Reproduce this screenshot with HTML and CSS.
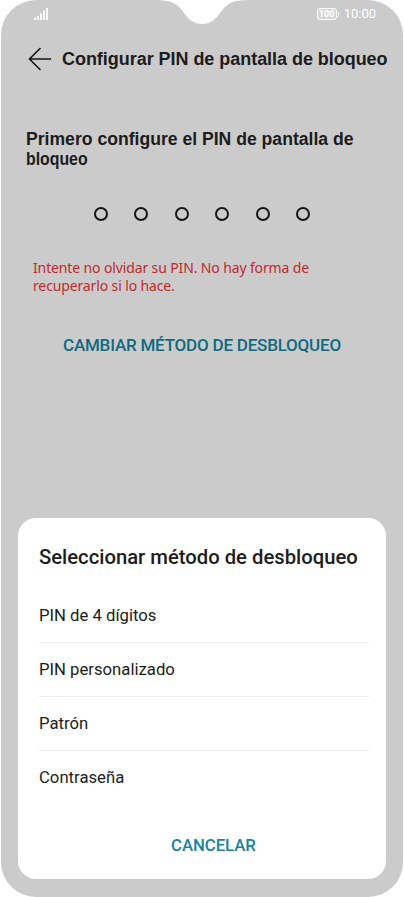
FILE: index.html
```html
<!DOCTYPE html>
<html lang="es">
	<head>
		<meta charset="utf-8" />
		<title>Configurar PIN</title>
		<link rel="stylesheet" href="styles.css">
	</head>
	<body>
		<div class="phone">
			<svg class="notch" width="92" height="25" viewBox="0 0 92 25">
				<path d="M0 0C15 0 21 3 28 13C33 20 38 24 46 24C54 24 59 20 64 13C71 3 77 0 92 0Z" fill="#fff"/>
			</svg>
			<div class="status">
				<svg class="signal" width="14" height="13" viewBox="0 0 14 13">
					<path d="M1 13v-2.500M4 13V9M7 13V6.500M10 13V3.500M13 13V1" stroke="#fff" stroke-width="1.700"/>
				</svg>
				<div class="battery">100</div>
				<span class="clock">10:00</span>
			</div>
			<div class="header">
				<svg class="back" width="24" height="24" viewBox="0 0 24 24">
					<path d="M12.500 1L1.500 12L12.500 23M1.500 12H23" fill="none" stroke="#161616" stroke-width="1.600"/>
				</svg>
				<h1>Configurar PIN de pantalla de bloqueo</h1>
			</div>
			<h2>Primero configure el PIN de pantalla de<br><span class="narrow">bloqueo</span></h2>
			<ul class="pin">
				<li></li>
				<li></li>
				<li></li>
				<li></li>
				<li></li>
				<li></li>
			</ul>
			<p class="warning">Intente no olvidar su PIN. No hay forma de<br>recuperarlo si lo hace.</p>
			<a class="change">CAMBIAR MÉTODO DE DESBLOQUEO</a>
			<div class="dialog">
				<h3>Seleccionar método de desbloqueo</h3>
				<ul class="methods">
					<li>PIN de 4 dígitos</li>
					<li>PIN personalizado</li>
					<li>Patrón</li>
					<li>Contraseña</li>
				</ul>
				<a class="cancel">CANCELAR</a>
			</div>
		</div>
	</body>
</html>
```
FILE: styles.css
```css
*{
	margin: 0;
	padding: 0;
	box-sizing: border-box;
}
body{
	background: #fff;
	font-family: Roboto, sans-serif;
	color: #1c1c1c;
}
ul{
	list-style: none;
}
.phone{
	position: relative;
	display: flex;
	flex-direction: column;
	width: 402px;
	height: 897px;
	margin: 0 1px;
	padding-bottom: 18px;
	background: #cbcbcb;
	border-radius: 35px;
	overflow: hidden;
}
.notch{
	position: absolute;
	top: 0;
	left: 155px;
}
.status{
	display: flex;
	align-items: center;
	height: 28px;
	padding: 0 27px 0 33px;
	color: #fff;
}
.signal{
	margin-right: auto;
	margin-top: -1px;
}
.battery{
	position: relative;
	width: 20px;
	height: 12px;
	margin-right: 7px;
	border: 1px solid #fff;
	border-radius: 3px;
	background: rgba(255,255,255,0.2);
	font-size: 9px;
	font-weight: 700;
	line-height: 10px;
	text-align: center;
}
.battery::after{
	content: "";
	position: absolute;
	top: 3px;
	right: -3px;
	width: 1px;
	height: 5px;
	background: #fff;
}
.clock{
	font-size: 13px;
	line-height: 28px;
}
.header{
	display: flex;
	align-items: center;
	height: 62px;
	padding-left: 27px;
}
.back{
	margin-right: 10px;
}
h1{
	font: bold 18px/24px "Liberation Sans", sans-serif;
	letter-spacing: -0.04px;
	white-space: nowrap;
}
h2{
	margin: 39px 0 0 25px;
	font: bold 17.6px/20px "Liberation Sans", sans-serif;
	white-space: nowrap;
}
.narrow{
	display: inline-block;
	transform: scaleX(0.9);
	transform-origin: left;
}
.pin{
	display: flex;
	justify-content: space-between;
	width: 216px;
	margin: 38px 0 0 93px;
}
.pin li{
	width: 14px;
	height: 14px;
	border: 2px solid #161616;
	border-radius: 50%;
}
.warning{
	margin: 38px 0 0 32px;
	font: 14px/18px "Noto Sans", sans-serif;
	letter-spacing: -0.13px;
	color: #c4282b;
	white-space: nowrap;
}
.change{
	margin: 40px 0 0 62px;
	font-size: 17px;
	font-weight: 500;
	letter-spacing: -0.21px;
	line-height: 20px;
	color: #0f6a80;
	white-space: nowrap;
}
.dialog{
	width: 368px;
	height: 361px;
	margin: auto 0 0 17px;
	padding: 26px 17px 0 21px;
	background: #fff;
	border-radius: 18px;
}
h3{
	font-size: 20.25px;
	font-weight: 500;
	line-height: 26px;
	white-space: nowrap;
}
.methods{
	margin-top: 19px;
}
.methods li{
	height: 54px;
	border-bottom: 1px solid #ebebeb;
	font-size: 16.7px;
	line-height: 54px;
}
.methods li:last-child{
	border-bottom: none;
}
.cancel{
	display: block;
	margin: 31px 0 0 132px;
	font-size: 16.7px;
	font-weight: 500;
	line-height: 20px;
	color: #16839f;
}
```
